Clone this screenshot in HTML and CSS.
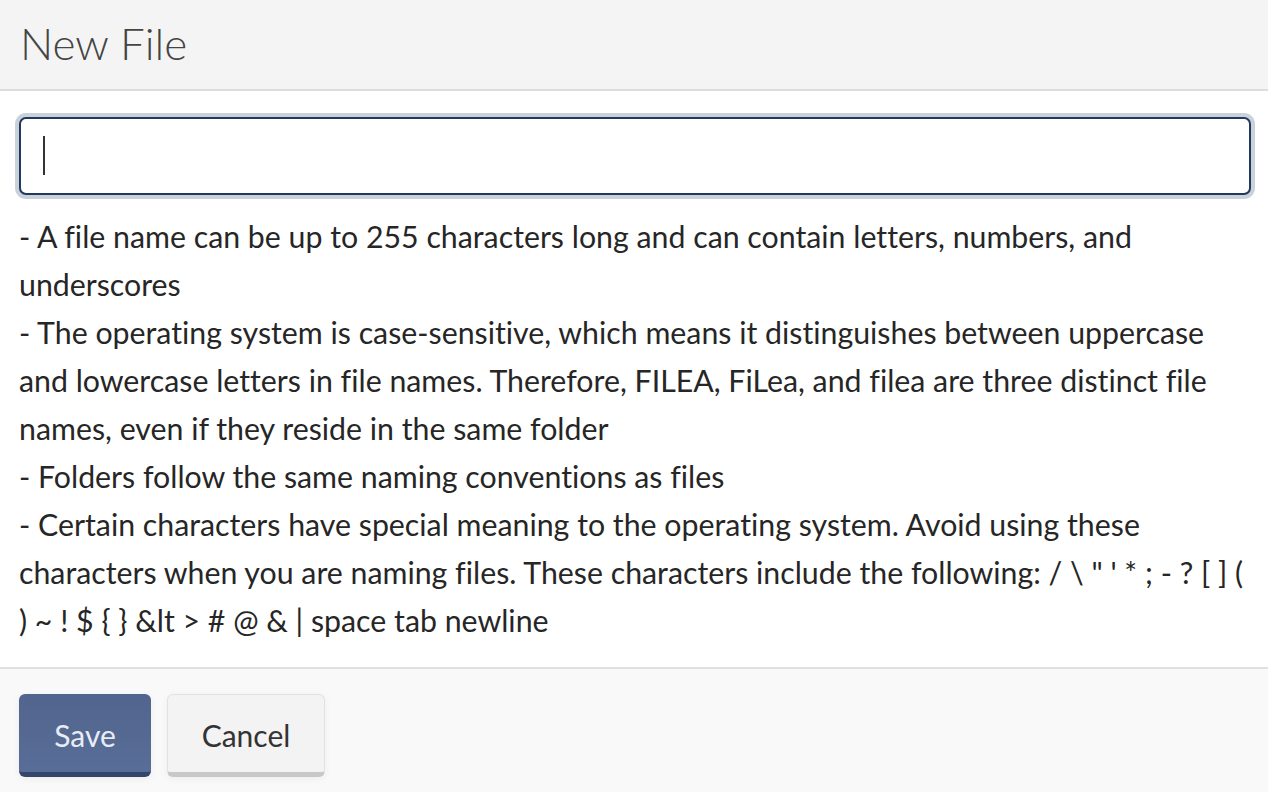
FILE: index.html
```html
<!DOCTYPE html>
<html lang="en">
<head>
<meta charset="utf-8">
<title>New File</title>
<link rel="stylesheet" href="styles.css">
</head>
<body>
<div class="dialog">
  <header class="dialog-header">
    <h1 class="dialog-title">New File</h1>
  </header>
  <section class="dialog-body">
    <label class="field">
      <input class="field-input" type="text" aria-label="File name">
      <span class="caret"></span>
    </label>
    <p class="rules">- A file name can be up to 255 characters long and can contain letters, numbers, and underscores<br>- The operating system is case-sensitive, which means it distinguishes between uppercase and lowercase letters in file names. Therefore, FILEA, FiLea, and filea are three distinct file names, even if they reside in the same folder<br>- Folders follow the same naming conventions as files<br>- Certain characters have special meaning to the operating system. Avoid using these characters when you are naming files. These characters include the following: / \ " ' * ; - ? [ ] ( ) ~ ! $ { } &amp;lt &gt; # @ &amp; | space tab newline</p>
  </section>
  <footer class="dialog-footer">
    <button class="btn btn-primary" type="button">Save</button>
    <button class="btn btn-default" type="button">Cancel</button>
  </footer>
</div>
</body>
</html>
```
FILE: styles.css
```css
html, body {
  margin: 0;
  padding: 0;
  height: 100%;
}

body {
  font-family: "Lato", "Open Sans", sans-serif;
  font-variant-ligatures: none;
  color: #262626;
  background: #ffffff;
}

.dialog {
  display: flex;
  flex-direction: column;
  min-height: 100%;
}

.dialog-header {
  background: #f4f4f4;
  border-bottom: 2px solid #dddddd;
  display: flex;
  align-items: center;
  padding: 0 20px 3px 20px;
  box-sizing: border-box;
  height: 91px;
}

.dialog-title {
  margin: 0;
  font-size: 44px;
  font-weight: 300;
  color: #444444;
  line-height: 1.2;
}

.dialog-body {
  padding: 26px 17px 23px 19px;
}

.field {
  display: block;
  position: relative;
}

.field-input {
  display: block;
  width: 100%;
  height: 78px;
  box-sizing: border-box;
  border: 2px solid #1f3a5c;
  border-radius: 7px;
  box-shadow: 0 0 0 4px #c9d1db;
  padding: 0 22px;
  font-family: inherit;
  font-size: 30px;
  color: #262626;
  background: #ffffff;
  outline: none;
  caret-color: transparent;
}

.caret {
  position: absolute;
  left: 24px;
  top: 19px;
  width: 2px;
  height: 39px;
  background: #333333;
}

.rules {
  margin: 17px 0 0 0;
  font-size: 30.3px;
  line-height: 48px;
  color: #262626;
}

.dialog-footer {
  flex: 1;
  background: #f9f9f9;
  border-top: 2px solid #e0e0e0;
  padding: 25px 19px;
  display: flex;
  align-items: flex-start;
  gap: 16px;
}

.btn {
  font-family: inherit;
  font-variant-ligatures: none;
  font-size: 30px;
  line-height: 36px;
  border-radius: 6px;
  cursor: pointer;
  box-sizing: border-box;
  box-shadow: 0 2px 8px rgba(0, 0, 0, 0.05);
}

.btn-primary {
  width: 132px;
  height: 83px;
  padding: 3px 0 0 0;
  color: #e8ecf4;
  background: linear-gradient(#51658e, #586d97);
  border: none;
  border-bottom: 5px solid #34466a;
}

.btn-default {
  width: 158px;
  height: 83px;
  padding: 2px 0 0 0;
  color: #333333;
  background: #f3f3f3;
  border: 1px solid #e2e2e2;
  border-bottom: 5px solid #c8c8c8;
}
```
